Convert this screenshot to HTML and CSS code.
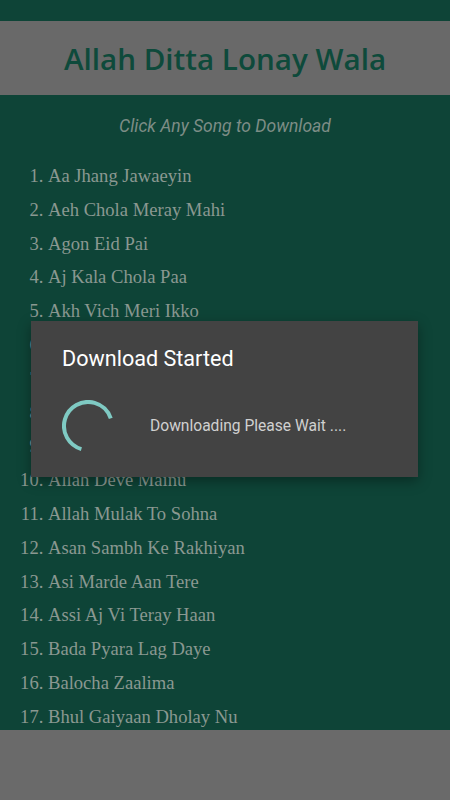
FILE: index.html
```html
<!DOCTYPE html>
<html lang="en">
<head>
  <meta charset="UTF-8">
  <meta name="viewport" content="width=device-width, initial-scale=1.0">
  <title>Allah Ditta Lonay Wala</title>
  <link rel="stylesheet" href="styles.css">
</head>
<body>
  <div class="status-bar"></div>

  <div class="header">
    <h1>Allah Ditta Lonay Wala</h1>
  </div>

  <p class="hint">Click Any Song to Download</p>

  <ol class="songs">
    <li>Aa Jhang Jawaeyin</li>
    <li>Aeh Chola Meray Mahi</li>
    <li>Agon Eid Pai</li>
    <li>Aj Kala Chola Paa</li>
    <li>Akh Vich Meri Ikko</li>
    <li>Akhiyan Nu Rehan De</li>
    <li>Allah Hu Allah Hu</li>
    <li>Allah Jane Te Rab Jane</li>
    <li>Allah Kare Kade Aa</li>
    <li>Allah Deve Mainu</li>
    <li>Allah Mulak To Sohna</li>
    <li>Asan Sambh Ke Rakhiyan</li>
    <li>Asi Marde Aan Tere</li>
    <li>Assi Aj Vi Teray Haan</li>
    <li>Bada Pyara Lag Daye</li>
    <li>Balocha Zaalima</li>
    <li>Bhul Gaiyaan Dholay Nu</li>
  </ol>

  <div class="banner"></div>

  <div class="dialog">
    <h2>Download Started</h2>
    <div class="dialog-body">
      <svg class="spinner" width="52" height="52" viewBox="0 0 52 52">
        <circle cx="26" cy="26" r="24" fill="none" stroke="#7fcac3" stroke-width="4"
                stroke-dasharray="98 200" transform="rotate(106 26 26)"/>
      </svg>
      <span>Downloading Please Wait ....</span>
    </div>
  </div>
</body>
</html>
```

FILE: styles.css
```css
body {
  margin: 0;
  height: 800px;
  display: flex;
  flex-direction: column;
  background-color: #0e4437;
  overflow: hidden;
}
.status-bar {
  height: 21px;
  flex-shrink: 0;
}
.header {
  height: 74px;
  flex-shrink: 0;
  background: #696969;
  display: flex;
  align-items: center;
  justify-content: center;
}
.header h1 {
  margin: 0;
  font-family: "Open Sans", sans-serif;
  font-weight: 600;
  font-size: 29.6px;
  color: #0e4a3b;
}
.hint {
  margin: 21px 0 0;
  text-align: center;
  font-family: Roboto, sans-serif;
  font-style: italic;
  font-size: 17.5px;
  line-height: 20px;
  color: #7d8d86;
}
.songs {
  flex: 1;
  overflow: hidden;
  margin: 23px 0 0;
  padding-left: 48px;
  font-family: "Liberation Serif", serif;
  font-size: 18.6px;
  line-height: 33.8px;
  color: #8a9891;
}
.banner {
  height: 70px;
  flex-shrink: 0;
  background: #6a6a6a;
}
.dialog {
  position: absolute;
  left: 31px;
  top: 321px;
  width: 387px;
  height: 156px;
  box-sizing: border-box;
  padding: 26px 31px;
  background: #434343;
  box-shadow: 0 4px 12px rgba(0,0,0,0.35);
  font-family: Roboto, sans-serif;
}
.dialog h2 {
  margin: 0;
  font-weight: 400;
  font-size: 21.6px;
  line-height: 24px;
  color: #ffffff;
}
.dialog-body {
  display: flex;
  align-items: center;
  gap: 36px;
  margin-top: 29px;
  font-size: 15.6px;
  color: #d0d0d0;
}
```
